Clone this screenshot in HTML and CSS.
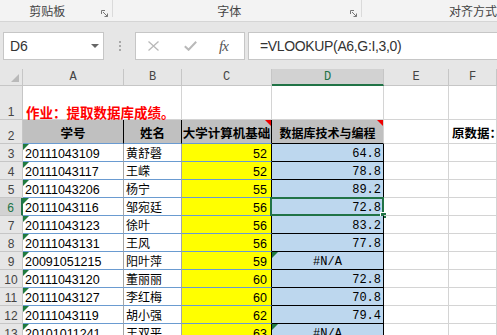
FILE: index.html
```html
<!DOCTYPE html>
<html lang="zh-CN">
<head>
    <meta charset="UTF-8">
    <meta name="viewport" content="width=device-width, initial-scale=1.0">
    <title>提取数据库成绩</title>
    <link rel="stylesheet" href="styles.css">
</head>
<body>
    <div class="ribbon">
        <div class="group g-clip">
            <span class="glabel">剪贴板</span>
            <svg class="launcher" width="7" height="7" viewBox="0 0 7 7"><path d="M0.5 4V0.5H4M2 2L6.5 6.5M6.5 3.5V6.5H3.5" fill="none" stroke="#777" stroke-width="1"/></svg>
        </div>
        <div class="group g-font">
            <span class="glabel">字体</span>
            <svg class="launcher" width="7" height="7" viewBox="0 0 7 7"><path d="M0.5 4V0.5H4M2 2L6.5 6.5M6.5 3.5V6.5H3.5" fill="none" stroke="#777" stroke-width="1"/></svg>
        </div>
        <div class="group g-align">
            <span class="glabel">对齐方式</span>
        </div>
    </div>

    <div class="fbar">
        <div class="namebox">
            <span>D6</span>
            <span class="caret"></span>
        </div>
        <div class="grip"><i></i><i></i><i></i></div>
        <div class="fx-box">
            <svg width="11" height="10" viewBox="0 0 11 10"><path d="M0.5 0.5L10.5 9.5M10.5 0.5L0.5 9.5" stroke="#b9b9b9" stroke-width="1.3"/></svg>
            <svg width="13" height="10" viewBox="0 0 13 10"><path d="M0.8 5.2L4.6 8.8L12.2 0.8" fill="none" stroke="#b9b9b9" stroke-width="2"/></svg>
            <span class="fx">fx</span>
        </div>
        <div class="formula">=VLOOKUP(A6,G:I,3,0)</div>
    </div>

    <div class="sheet">
        <div class="row head">
            <div class="ch corner"><span class="corner-mark"></span></div>
            <div class="ch">A</div>
            <div class="ch">B</div>
            <div class="ch">C</div>
            <div class="ch sel">D</div>
            <div class="ch">E</div>
            <div class="ch">F</div>
        </div>

        <div class="row r1">
            <div class="rh">1</div>
            <div class="c title">作业：提取数据库成绩。</div>
            <div class="c"></div>
            <div class="c"></div>
            <div class="c"></div>
            <div class="c"></div>
        </div>

        <div class="row r2">
            <div class="rh">2</div>
            <div class="c th">学号</div>
            <div class="c th">姓名</div>
            <div class="c th note">大学计算机基础</div>
            <div class="c th th-db note">数据库技术与编程</div>
            <div class="c"></div>
            <div class="c src">原数据：</div>
        </div>

        <div class="row">
            <div class="rh">3</div>
            <div class="c id">20111043109</div>
            <div class="c name">黄舒磬</div>
            <div class="c score">52</div>
            <div class="c db">64.8</div>
            <div class="c"></div>
            <div class="c"></div>
        </div>
        <div class="row">
            <div class="rh">4</div>
            <div class="c id">20111043117</div>
            <div class="c name">王嵘</div>
            <div class="c score">52</div>
            <div class="c db">78.8</div>
            <div class="c"></div>
            <div class="c"></div>
        </div>
        <div class="row">
            <div class="rh">5</div>
            <div class="c id">20111043206</div>
            <div class="c name">杨宁</div>
            <div class="c score">55</div>
            <div class="c db">89.2</div>
            <div class="c"></div>
            <div class="c"></div>
        </div>
        <div class="row">
            <div class="rh sel">6</div>
            <div class="c id">20111043116</div>
            <div class="c name">邹宛廷</div>
            <div class="c score">56</div>
            <div class="c db active">72.8<span class="cursor"><span class="handle"></span></span></div>
            <div class="c"></div>
            <div class="c"></div>
        </div>
        <div class="row">
            <div class="rh">7</div>
            <div class="c id">20111043123</div>
            <div class="c name">徐叶</div>
            <div class="c score">56</div>
            <div class="c db">83.2</div>
            <div class="c"></div>
            <div class="c"></div>
        </div>
        <div class="row">
            <div class="rh">8</div>
            <div class="c id">20111043131</div>
            <div class="c name">王风</div>
            <div class="c score">56</div>
            <div class="c db">77.8</div>
            <div class="c"></div>
            <div class="c"></div>
        </div>
        <div class="row">
            <div class="rh">9</div>
            <div class="c id">20091051215</div>
            <div class="c name">阳叶萍</div>
            <div class="c score">59</div>
            <div class="c db na">#N/A</div>
            <div class="c"></div>
            <div class="c"></div>
        </div>
        <div class="row">
            <div class="rh">10</div>
            <div class="c id">20111043120</div>
            <div class="c name">董丽丽</div>
            <div class="c score">60</div>
            <div class="c db">72.8</div>
            <div class="c"></div>
            <div class="c"></div>
        </div>
        <div class="row">
            <div class="rh">11</div>
            <div class="c id">20111043127</div>
            <div class="c name">李红梅</div>
            <div class="c score">60</div>
            <div class="c db">70.8</div>
            <div class="c"></div>
            <div class="c"></div>
        </div>
        <div class="row">
            <div class="rh">12</div>
            <div class="c id">20111043119</div>
            <div class="c name">胡小强</div>
            <div class="c score">62</div>
            <div class="c db">79.4</div>
            <div class="c"></div>
            <div class="c"></div>
        </div>
        <div class="row">
            <div class="rh">13</div>
            <div class="c id">20101011241</div>
            <div class="c name">王双平</div>
            <div class="c score">63</div>
            <div class="c db na">#N/A</div>
            <div class="c"></div>
            <div class="c"></div>
        </div>
    </div>
</body>
</html>
```

FILE: styles.css
```css
body {
    margin: 0;
    width: 497px;
    height: 335px;
    overflow: hidden;
    background: #e6e6e6;
    font-family: "Liberation Sans", "Noto Sans CJK SC", sans-serif;
    color: #000;
}

/* ribbon group labels */
.ribbon {
    display: flex;
    height: 22px;
    box-sizing: border-box;
    background: #f3f3f3;
    border-bottom: 1px solid #d5d5d5;
}
.group {
    display: flex;
    height: 17px;
    box-sizing: border-box;
    border-right: 1px solid #dadada;
}
.g-clip { width: 114px; }
.g-font { width: 250px; }
.g-align { flex: 1; border-right: none; }
.glabel {
    flex: 1;
    text-align: center;
    padding-top: 4px;
    font-family: "Noto Sans CJK SC", sans-serif;
    font-size: 12px;
    line-height: 13px;
    color: #444;
    white-space: nowrap;
}
.g-clip .glabel { padding-right: 7px; }
.g-font .glabel { padding-right: 5px; }
.g-align .glabel { text-align: left; padding-left: 87px; }
.launcher {
    margin-top: 10px;
    margin-right: 4px;
}

/* formula bar */
.fbar {
    display: flex;
    height: 47px;
    box-sizing: border-box;
    padding: 10px 0 0 3px;
}
.namebox, .fx-box, .formula {
    height: 28px;
    box-sizing: border-box;
    background: #fff;
    border: 1px solid #c6c6c6;
    display: flex;
    align-items: center;
}
.namebox {
    width: 101px;
    justify-content: space-between;
    padding: 0 4px 0 6px;
    font-size: 14px;
    color: #333;
}
.caret {
    width: 0;
    height: 0;
    border-left: 4px solid transparent;
    border-right: 4px solid transparent;
    border-top: 4px solid #666;
}
.grip {
    width: 31px;
    display: flex;
    flex-direction: column;
    align-items: center;
    gap: 2px;
    padding-top: 9px;
}
.grip i {
    width: 2px;
    height: 2px;
    background: #a8a8a8;
}
.fx-box {
    width: 110px;
    padding-left: 12px;
    gap: 0;
}
.fx-box svg:first-child { margin-right: 25px; }
.fx-box svg:nth-child(2) { margin-right: 22px; }
.fx {
    font-family: "Liberation Serif", serif;
    font-style: italic;
    font-size: 15px;
    color: #555;
    letter-spacing: -1px;
}
.formula {
    flex: 1;
    margin-left: 3px;
    padding-left: 11px;
    border-right: none;
    font-size: 14px;
    letter-spacing: -0.35px;
    color: #333;
}

/* worksheet */
.sheet {
    background: #fff;
}
.row {
    display: grid;
    grid-template-columns: 23px 101px 58px 90px 112px 65px 1fr;
    height: 18px;
}
.row.head { height: 17px; background: #e6e6e6; }
.row.r1 { height: 34px; }
.row.r2 { height: 24px; }

.c, .rh, .ch {
    position: relative;
    box-sizing: border-box;
    display: flex;
    align-items: flex-end;
    min-width: 0;
    white-space: nowrap;
    border-right: 1px solid #d4d4d4;
    border-bottom: 1px solid #d4d4d4;
    font-size: 12.5px;
}
.ch {
    align-items: center;
    justify-content: center;
    background: #e6e6e6;
    border-color: #c6c6c6;
    font-family: "Liberation Mono", monospace;
    font-size: 12px;
    color: #444;
}
.ch.sel {
    background: #d2d2d2;
    color: #217346;
    border-bottom: 2px solid #217346;
}
.corner {
    justify-content: flex-end;
    align-items: flex-end;
    padding: 0 3px 3px 0;
}
.corner-mark {
    width: 0;
    height: 0;
    border-left: 8px solid transparent;
    border-bottom: 8px solid #b9b9b9;
}
.rh {
    justify-content: center;
    background: #e6e6e6;
    border-color: #c6c6c6;
    font-size: 12px;
    color: #444;
}
.rh.sel {
    background: #d2d2d2;
    color: #217346;
    border-right: 2px solid #217346;
}

.title {
    grid-column: span 2;
    padding-left: 3px;
    font-family: "Noto Sans CJK SC", sans-serif;
    font-weight: bold;
    font-size: 13.5px;
    line-height: 1;
    color: #f00;
}

.th {
    justify-content: center;
    padding-bottom: 1px;
    background: #c0c0c0;
    border-right-color: #000;
    border-bottom-color: #6a9bd1;
    font-family: "Noto Sans CJK SC", sans-serif;
    font-weight: bold;
    line-height: 18px;
}
.th-db {
    font-size: 12px;
    border-right-color: #d4d4d4;
    border-bottom-color: #000;
}
.note::after {
    content: "";
    position: absolute;
    top: 0;
    right: 0;
    border-top: 6px solid #e00;
    border-left: 6px solid transparent;
}
.src {
    padding-left: 3px;
    padding-bottom: 1px;
    font-family: "Noto Sans CJK SC", sans-serif;
    font-weight: bold;
    line-height: 18px;
}

.id, .name {
    padding-left: 2px;
    border-right-color: #a6a6a6;
    border-bottom-color: #6a9bd1;
}
.id::before, .na::before {
    content: "";
    position: absolute;
    top: 0;
    left: 0;
    border-top: 6px solid #1f7a3f;
    border-right: 6px solid transparent;
}
.name {
    font-family: "Noto Sans CJK SC", sans-serif;
    font-size: 12px;
    line-height: 17px;
}
.score {
    justify-content: flex-end;
    padding-right: 4px;
    background: #ff0;
    border-right-color: #000;
    border-bottom-color: #6a9bd1;
}
.db {
    justify-content: flex-end;
    padding-right: 2px;
    background: #bdd7ee;
    border-right-color: #000;
    border-bottom-color: #000;
    font-family: "Liberation Mono", monospace;
    font-size: 12px;
}
.db.na { justify-content: center; padding-right: 0; }

/* active cell */
.cursor {
    position: absolute;
    top: -1px;
    left: -2px;
    right: -1px;
    bottom: -1px;
    border: 2px solid #217346;
}
.handle {
    position: absolute;
    right: -4px;
    bottom: -4px;
    width: 5px;
    height: 5px;
    background: #217346;
    outline: 1px solid #fff;
}
```
